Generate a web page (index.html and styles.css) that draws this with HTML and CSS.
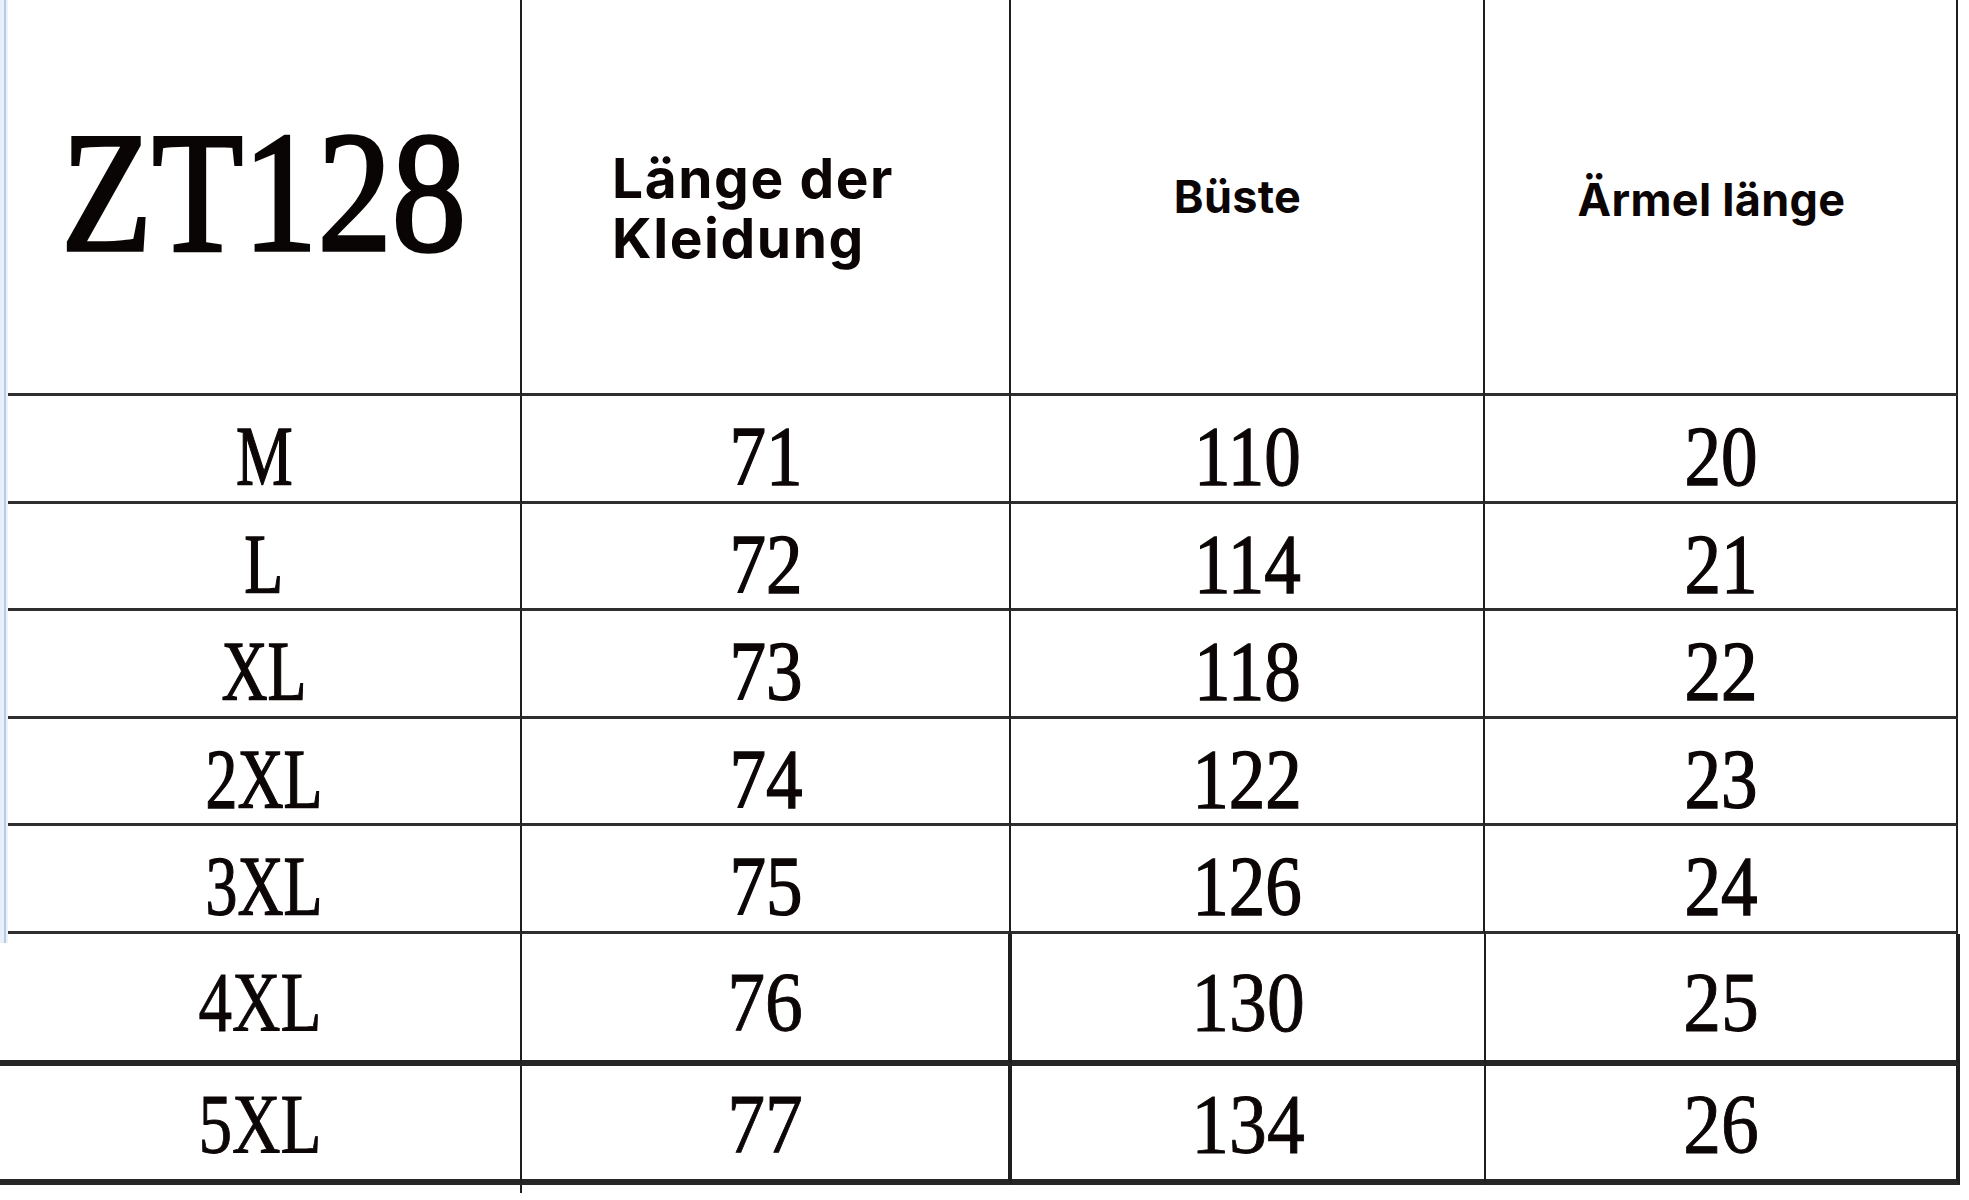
FILE: index.html
```html
<!DOCTYPE html>
<html lang="de">
<head>
<meta charset="utf-8">
<title>ZT128 Größentabelle</title>
<link rel="stylesheet" href="styles.css">
</head>
<body>
<div class="sheet">
  <div class="upper-wrap">
    <div class="gutter"></div>
    <div class="grid upper">
      <div class="cell head code-cell"><span class="code">ZT128</span></div>
      <div class="cell head head-len"><span class="htxt big">Länge der<br>Kleidung</span></div>
      <div class="cell head head-bust"><span class="htxt">Büste</span></div>
      <div class="cell head head-sleeve"><span class="htxt">Ärmel länge</span></div>

      <div class="cell row"><span class="sz">M</span></div>
      <div class="cell row"><span class="num">71</span></div>
      <div class="cell row"><span class="num">110</span></div>
      <div class="cell row"><span class="num">20</span></div>

      <div class="cell row"><span class="sz">L</span></div>
      <div class="cell row"><span class="num">72</span></div>
      <div class="cell row"><span class="num">114</span></div>
      <div class="cell row"><span class="num">21</span></div>

      <div class="cell row"><span class="sz">XL</span></div>
      <div class="cell row"><span class="num">73</span></div>
      <div class="cell row"><span class="num">118</span></div>
      <div class="cell row"><span class="num">22</span></div>

      <div class="cell row"><span class="sz">2XL</span></div>
      <div class="cell row"><span class="num">74</span></div>
      <div class="cell row"><span class="num">122</span></div>
      <div class="cell row"><span class="num">23</span></div>

      <div class="cell row"><span class="sz">3XL</span></div>
      <div class="cell row"><span class="num">75</span></div>
      <div class="cell row"><span class="num">126</span></div>
      <div class="cell row"><span class="num">24</span></div>
    </div>
  </div>

  <div class="grid lower">
    <div class="lcell c1 r1"><span class="sz low">4XL</span></div>
    <div class="lcell c2 r1"><span class="num low">76</span></div>
    <div class="lcell c3 r1"><span class="num low">130</span></div>
    <div class="lcell c4 r1"><span class="num low">25</span></div>

    <div class="lcell c1 r2 tail"><span class="sz low">5XL</span></div>
    <div class="lcell c2 r2"><span class="num low">77</span></div>
    <div class="lcell c3 r2"><span class="num low">134</span></div>
    <div class="lcell c4 r2"><span class="num low">26</span></div>
  </div>
</div>
</body>
</html>
```

FILE: styles.css
```css
* { box-sizing: border-box; }

html, body {
  margin: 0;
  padding: 0;
  background: #ffffff;
}

body {
  width: 1969px;
  height: 1200px;
  overflow: hidden;
  color: #0c0606;
  font-family: "Liberation Serif", "Times New Roman", serif;
}

.sheet {
  display: flex;
  flex-direction: column;
}

.upper-wrap {
  display: flex;
  align-items: flex-start;
}

.gutter {
  width: 8px;
  height: 943px;
  margin-bottom: -9.5px;
  background: linear-gradient(90deg, #e9f0f9 0 4px, #b6cbe3 4px 6px, #edf2f9 6px 8px);
}

.grid {
  display: grid;
}

.upper {
  width: 1950px;
  grid-template-columns: 514px 489px 474px 473px;
  grid-template-rows: 396px repeat(5, 107.5px);
}

.cell {
  display: flex;
  align-items: center;
  justify-content: center;
  border-right: 2px solid #1e1e1e;
  border-bottom: 3px solid #2e2e2e;
}

/* header */
.code-cell { padding-bottom: 8px; }

.code {
  display: inline-block;
  font-family: "Liberation Serif", "Times New Roman", serif;
  font-weight: 400;
  font-size: 171px;
  line-height: 1;
  transform: scaleX(0.87);
  -webkit-text-stroke: 3.5px #0a0505;
  color: #0a0505;
}

.htxt {
  font-family: Inter, "Noto Sans", sans-serif;
  font-weight: 700;
  font-size: 45px;
  line-height: 54px;
  letter-spacing: 0.3px;
  color: #0c0505;
}

.htxt.big {
  font-size: 55px;
  line-height: 60px;
  letter-spacing: 1.6px;
}

.head-len {
  justify-content: flex-start;
  padding-left: 90px;
  padding-top: 23px;
}

.head-bust { padding-right: 19px; }

.head-sleeve {
  padding-right: 18px;
  padding-top: 6px;
}

/* body rows */
.row { padding-top: 18px; }

.num, .sz {
  display: inline-block;
  font-family: "Liberation Serif", "Times New Roman", serif;
  font-size: 84px;
  line-height: 1;
  -webkit-text-stroke: 1.3px #0c0606;
}

.num { transform: scaleX(0.87); }
.sz { transform: scaleX(0.76); }

.num.low { transform: scaleX(0.9); -webkit-text-stroke: 0.9px #0c0606; }
.sz.low { transform: scaleX(0.8); -webkit-text-stroke: 0.9px #0c0606; }

/* lower block */
.lower {
  width: 1960px;
  grid-template-columns: 522px 490px 474px 474px;
  grid-template-rows: 132.5px 119px;
}

.lcell {
  display: flex;
  align-items: center;
  justify-content: center;
  border-bottom: 6px solid #262626;
}

.lcell.c1 { border-right: 2px solid #1e1e1e; }
.lcell.c2 { border-right: 4px solid #1e1e1e; }
.lcell.c3 { border-right: 2px solid #1e1e1e; }
.lcell.c4 { border-right: 4px solid #1e1e1e; }

.lcell.r1 { padding-top: 12px; }
.lcell.r2 { padding-top: 5px; }

.lcell.tail { position: relative; }
.lcell.tail::after {
  content: "";
  position: absolute;
  right: -2px;
  bottom: -14px;
  width: 2px;
  height: 8px;
  background: #1e1e1e;
}
```
